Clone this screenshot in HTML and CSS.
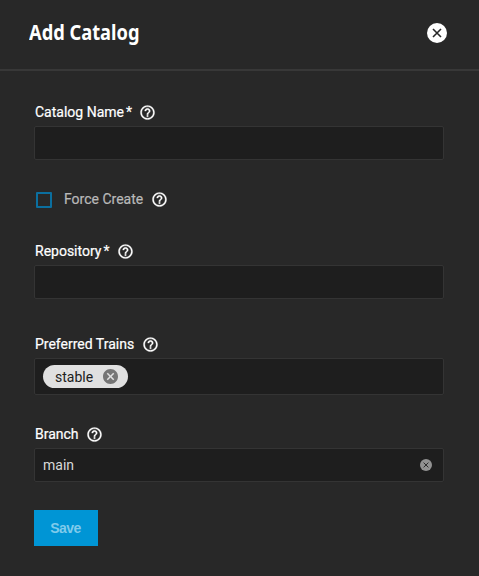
FILE: index.html
```html
<!DOCTYPE html>
<html lang="en">
<head>
<meta charset="utf-8">
<title>Add Catalog</title>
<link rel="stylesheet" href="styles.css">
</head>
<body>
<svg class="defs" aria-hidden="true">
  <symbol id="help" viewBox="0 0 24 24"><path d="M11 18h2v-2h-2v2zm1-16C6.480 2 2 6.480 2 12s4.480 10 10 10 10-4.480 10-10S17.520 2 12 2zm0 18c-4.410 0-8-3.590-8-8s3.590-8 8-8 8 3.590 8 8-3.590 8-8 8zm0-14c-2.210 0-4 1.790-4 4h2c0-1.100.9-2 2-2s2 .9 2 2c0 2-3 1.750-3 5h2c0-2.250 3-2.500 3-5 0-2.210-1.790-4-4-4z"/></symbol>
  <symbol id="cancel" viewBox="2 2 20 20"><path d="M12 2C6.470 2 2 6.470 2 12s4.470 10 10 10 10-4.470 10-10S17.530 2 12 2zm5 13.590L15.590 17 12 13.410 8.410 17 7 15.590 10.590 12 7 8.410 8.410 7 12 10.590 15.590 7 17 8.410 13.410 12 17 15.590z"/></symbol>
  <symbol id="close" viewBox="0 0 20 20"><circle cx="10" cy="10" r="10"/><path class="cross" d="M6 6l8 8M14 6l-8 8"/></symbol>
</svg>
<header class="header">
  <h1 class="title">Add Catalog</h1>
  <svg class="close"><use href="#close"/></svg>
</header>
<main class="form">
  <section class="field name">
    <div class="label"><span>Catalog Name</span><span class="star">*</span><svg class="help"><use href="#help"/></svg></div>
    <div class="input"></div>
  </section>
  <div class="check">
    <span class="box"></span><span class="check-text">Force Create</span><svg class="help"><use href="#help"/></svg>
  </div>
  <section class="field repository">
    <div class="label"><span>Repository</span><span class="star">*</span><svg class="help"><use href="#help"/></svg></div>
    <div class="input"></div>
  </section>
  <section class="field trains">
    <div class="label"><span>Preferred Trains</span><svg class="help"><use href="#help"/></svg></div>
    <div class="input chips"><span class="chip">stable<svg class="remove"><use href="#cancel"/></svg></span></div>
  </section>
  <section class="field branch">
    <div class="label"><span>Branch</span><svg class="help"><use href="#help"/></svg></div>
    <div class="input"><span>main</span><svg class="clear"><use href="#close"/></svg></div>
  </section>
  <button class="save">Save</button>
</main>
</body>
</html>
```
FILE: styles.css
```css
* { box-sizing: border-box; }
body {
  margin: 0;
  height: 576px;
  overflow: hidden;
  background: #282828;
  color: #fff;
  font: 14px/20px Roboto, sans-serif;
}
.defs { display: none; }
svg { display: block; flex: none; fill: currentColor; }
.header {
  height: 71px;
  padding: 0 32px 5px 29px;
  display: flex;
  align-items: center;
  justify-content: space-between;
  border-bottom: 2px solid #383838;
}
.title {
  margin: 0;
  font: 700 21px/30px "Noto Sans", sans-serif;
  transform: scaleX(.87);
  transform-origin: left;
}
.close { width: 20px; height: 20px; margin-top: 2px; }
.cross { stroke: #282828; stroke-width: 1.6; fill: none; }
.form { padding: 31px 35px 0 34px; }
.label {
  display: flex;
  align-items: center;
  height: 20px;
  margin-bottom: 4px;
  padding-left: 1px;
  -webkit-text-stroke: .2px #fff;
}
.star { margin-left: 2px; }
.help {
  width: 17px;
  height: 17px;
  margin: 1px 0 0 7.500px;
  stroke: currentColor;
  stroke-width: .4;
}
.input {
  height: 34px;
  padding: 0 11px 0 8px;
  display: flex;
  align-items: center;
  justify-content: space-between;
  background: #1e1e1e;
  border: 1px solid #343434;
  border-radius: 2px;
  color: #d8d8d8;
}
.check {
  display: flex;
  align-items: center;
  height: 20px;
  margin-top: 29px;
  padding-left: 2px;
  color: #b9b9b9;
  -webkit-text-stroke: .2px #b9b9b9;
}
.box { width: 16px; height: 16px; margin: 2px 12px 0 0; border: 2px solid #0b6f9f; border-radius: 1px; }
.check .help { color: #fff; }
.repository { margin-top: 32px; }
.trains { margin-top: 35px; }
.chips { height: 37px; padding-left: 8px; }
.chip {
  display: flex;
  align-items: center;
  justify-content: space-between;
  width: 85px;
  height: 23px;
  padding: 0 10px 0 12px;
  background: #e0e0e0;
  border-radius: 12px;
  color: #202020;
  line-height: 18px;
}
.remove { width: 15px; height: 15px; color: #757575; }
.branch { margin-top: 29px; }
.clear { width: 12px; height: 12px; color: #929292; }
.save {
  display: block;
  width: 64px;
  height: 36px;
  margin-top: 28px;
  padding: 0 1px 0 0;
  border: 0;
  background: #0095d5;
  color: #7fcaeb;
  font: 700 14px "Liberation Sans", sans-serif;
  letter-spacing: -.5px;
}
```
